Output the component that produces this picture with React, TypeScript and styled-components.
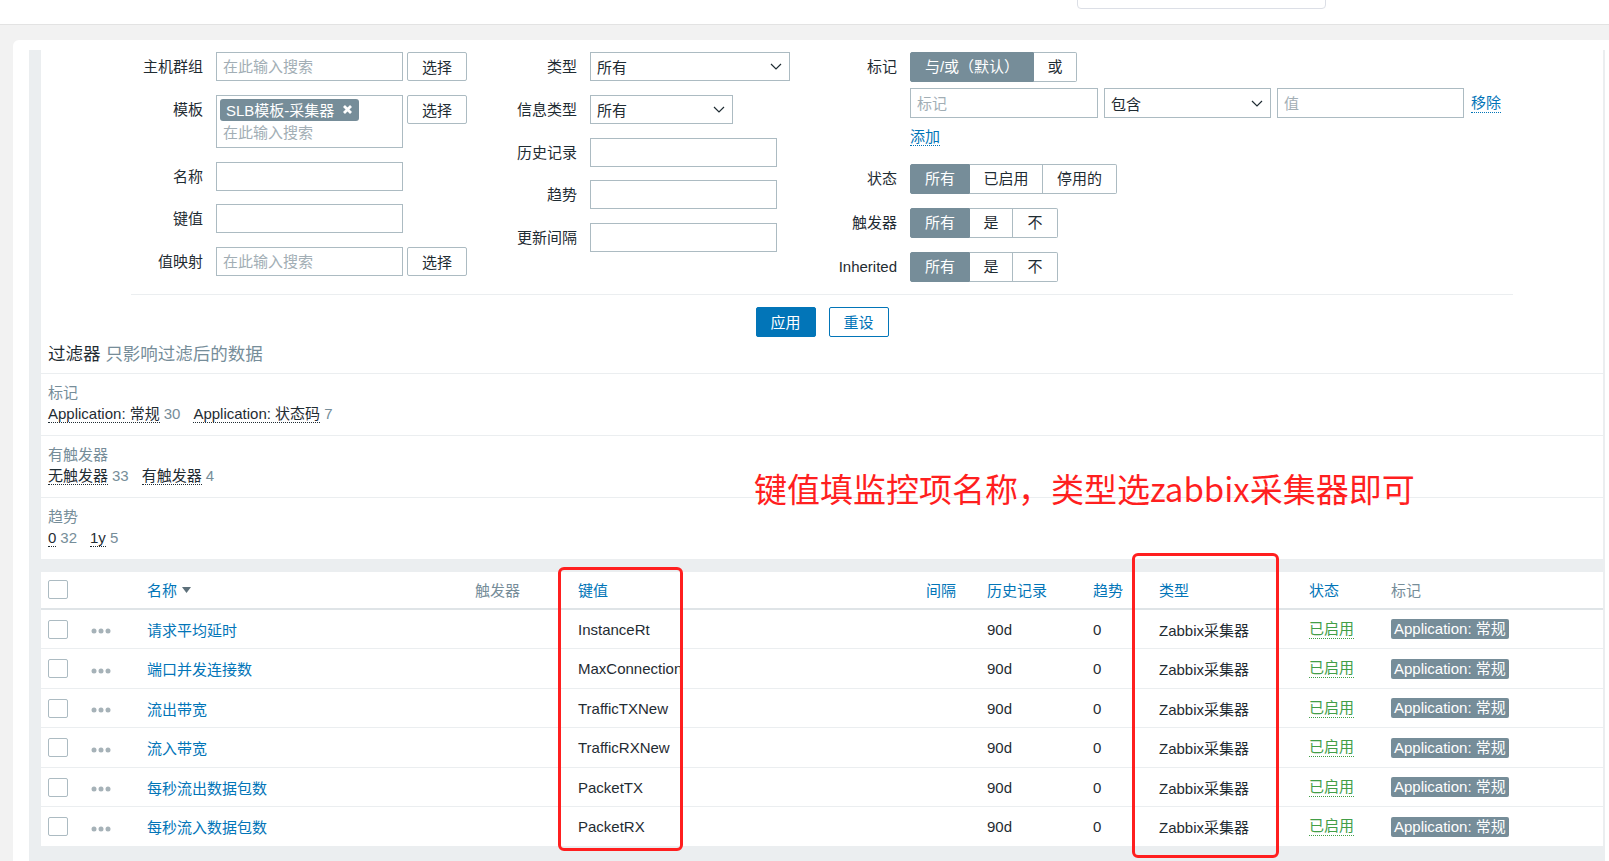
import React from 'react';
import styled, { createGlobalStyle } from 'styled-components';

const GlobalStyle = createGlobalStyle`
  html, body { margin: 0; padding: 0; background: #ffffff; overflow: hidden; }
  body {
    font-family: "Liberation Sans", Arial, "Noto Sans CJK SC", sans-serif;
    font-size: 15px;
    color: #1f2c33;
  }
  *, *::before, *::after { box-sizing: border-box; }
`;

const Page = styled.div`
  position: relative;
  width: 1609px;
  height: 861px;
  overflow: hidden;
  display: flex;
  flex-direction: column;
`;

const TopBar = styled.header`
  height: 25px;
  flex: none;
  background: #fff;
  border-bottom: 1px solid #e3e3e3;
  display: flex;
  justify-content: flex-end;
  padding-right: 283px;
`;

const TopSearch = styled.div`
  width: 249px;
  height: 30px;
  margin-top: -21px;
  border: 1px solid #dcdfe6;
  border-radius: 4px;
`;

const Main = styled.main`
  flex: 1;
  min-height: 0;
  background: #f2f2f2;
  padding: 15px 0 0 13px;
  display: flex;
`;

const Card = styled.div`
  flex: 1;
  background: #fff;
  border-radius: 6px 0 0 0;
  padding: 10px 4px 0 16px;
  display: flex;
`;

const Frame = styled.div`
  flex: 1;
  background: #ebeef0;
  padding: 0 2px 0 12px;
  display: flex;
  flex-direction: column;
`;

const FilterPanel = styled.section`
  background: #fff;
  padding-top: 2px;
`;

const FilterForm = styled.div`
  display: flex;
  padding: 0 0 12px 90px;
`;

const FormCol = styled.div<{ $labelW: number; $ml: number }>`
  display: grid;
  grid-template-columns: ${p => p.$labelW}px auto;
  column-gap: 13px;
  row-gap: 13.75px;
  margin-left: ${p => p.$ml}px;
  align-content: start;
`;

const Label = styled.div<{ $h?: number }>`
  text-align: right;
  line-height: ${p => p.$h ?? 29}px;
  white-space: nowrap;
  color: #1f2c33;
`;

const FieldGroup = styled.div`
  display: flex;
  gap: 4px;
  align-items: flex-start;
`;

const TextInput = styled.input<{ $w: number; $h?: number }>`
  width: ${p => p.$w}px;
  height: ${p => p.$h ?? 29}px;
  border: 1px solid #acbbc2;
  border-radius: 0;
  padding: 0 6px;
  margin: 0;
  font: inherit;
  color: #1f2c33;
  background: #fff;
  outline: none;
  &::placeholder { color: #a2aeb5; opacity: 1; }
`;

const SelectBox = styled.div<{ $w: number; $h?: number }>`
  width: ${p => p.$w}px;
  height: ${p => p.$h ?? 29}px;
  border: 1px solid #acbbc2;
  background: #fff;
  padding: 0 7px 0 6px;
  display: flex;
  align-items: center;
  justify-content: space-between;
  color: #1f2c33;
`;

const PickButton = styled.button`
  width: 60px;
  height: 29px;
  padding: 0;
  font: inherit;
  color: #1f2c33;
  background: #fff;
  border: 1px solid #acbbc2;
  border-radius: 2px;
`;

const MultiBox = styled.div`
  width: 187px;
  height: 53px;
  border: 1px solid #acbbc2;
  background: #fff;
  padding: 3px 0 0 3px;
  display: flex;
  flex-direction: column;
  align-items: flex-start;
`;

const Chip = styled.span`
  display: inline-flex;
  align-items: center;
  gap: 8px;
  height: 22px;
  padding: 0 6px 0 6px;
  background: #768d99;
  color: #fff;
  border-radius: 3px;
  white-space: nowrap;
`;

const MultiPlaceholder = styled.span`
  color: #a2aeb5;
  padding-left: 3px;
  margin-top: 2px;
  line-height: 20px;
`;

const Seg = styled.div`
  display: inline-flex;
`;

const SegBtn = styled.div<{ $w: number; $active?: boolean }>`
  width: ${p => p.$w}px;
  height: 30px;
  line-height: 28px;
  text-align: center;
  white-space: nowrap;
  border: 1px solid ${p => (p.$active ? '#768d99' : '#acbbc2')};
  background: ${p => (p.$active ? '#768d99' : '#fff')};
  color: ${p => (p.$active ? '#fff' : '#1f2c33')};
  & + & { border-left: none; }
  &:first-child { border-radius: 2px 0 0 2px; }
  &:last-child { border-radius: 0 2px 2px 0; }
`;

const TagBlock = styled.div`
  display: flex;
  flex-direction: column;
  align-items: flex-start;
`;

const TagRow = styled.div`
  display: flex;
  align-items: center;
  gap: 6px;
  margin-top: 6px;
`;

const AddRow = styled.div`
  margin-top: 10px;
  margin-bottom: 4.5px;
  line-height: 18px;
`;

const ActionLink = styled.span<{ $ml?: number }>`
  color: #0275b8;
  border-bottom: 1px dotted #0275b8;
  margin-left: ${p => p.$ml ?? 0}px;
  line-height: 18px;
  white-space: nowrap;
`;

const Divider = styled.div`
  height: 1px;
  background: #ebeef0;
  margin: 0 90px;
`;

const ButtonRow = styled.div`
  display: flex;
  justify-content: center;
  gap: 13px;
  margin-top: 12px;
`;

const ActionButton = styled.button<{ $primary?: boolean }>`
  width: 60px;
  height: 30px;
  padding: 0;
  font: inherit;
  border: 1px solid #0275b8;
  border-radius: 2px;
  background: ${p => (p.$primary ? '#0275b8' : '#fff')};
  color: ${p => (p.$primary ? '#fff' : '#0275b8')};
`;

const SubHeader = styled.div`
  margin-top: 7px;
  padding: 0 0 9px 7px;
  font-size: 17.5px;
  line-height: 20px;
  color: #1f2c33;
  border-bottom: 1px solid #ebeef0;
`;

const SubHint = styled.span`
  color: #768d99;
`;

const SubSection = styled.div`
  padding: 10px 7px 12px 7px;
  & + & { border-top: 1px solid #ebeef0; }
`;

const SubTitle = styled.div`
  color: #768d99;
  line-height: 18px;
`;

const SubValues = styled.div`
  display: flex;
  margin-top: 3px;
  line-height: 18px;
`;

const SubItem = styled.span`
  margin-right: 13px;
  white-space: nowrap;
`;

const SubLink = styled.span`
  color: #1f2c33;
  border-bottom: 1px dotted #1f2c33;
`;

const SubCount = styled.span`
  color: #768d99;
  margin-left: 4px;
`;

const TableBox = styled.section`
  background: #fff;
  margin-top: 13px;
`;

const columns = '43px 56px 328px 103px 348px 61px 106px 66px 150px 82px 1fr';

const TRow = styled.div<{ $head?: boolean }>`
  display: grid;
  grid-template-columns: ${columns};
  align-items: center;
  height: ${p => (p.$head ? '38px' : '39.5px')};
  border-bottom: ${p => (p.$head ? '2px solid #dfe4e7' : '1px solid #ebeef0')};
`;

const Cell = styled.div`
  padding-left: 7px;
  white-space: nowrap;
  display: flex;
  align-items: center;
`;

const DotsCell = styled(Cell)`
  padding-top: 4px;
`;

const HeadLink = styled.span`
  color: #0275b8;
`;

const HeadText = styled.span`
  color: #768d99;
`;

const RowLink = styled.span`
  color: #0275b8;
`;

const Check = styled.span`
  display: inline-block;
  width: 20px;
  height: 19px;
  border: 1px solid #acbbc2;
  border-radius: 2px;
  background: #fff;
`;

const StatusLink = styled.span`
  color: #429e47;
  border-bottom: 1px dotted #429e47;
  line-height: 18px;
`;

const TagPill = styled.span`
  display: inline-block;
  background: #768d99;
  color: #fff;
  padding: 0 3px;
  line-height: 20px;
  border-radius: 2px;
`;

const Note = styled.div`
  position: absolute;
  left: 754px;
  top: 468px;
  font-family: "Noto Sans CJK SC", sans-serif;
  font-size: 33px;
  line-height: 40px;
  color: #ff1f1f;
  white-space: nowrap;
`;

const Highlight = styled.div<{ $x: number; $y: number; $w: number; $h: number }>`
  position: absolute;
  left: ${p => p.$x}px;
  top: ${p => p.$y}px;
  width: ${p => p.$w}px;
  height: ${p => p.$h}px;
  border: 3px solid #ff1f1f;
  border-radius: 6px;
  pointer-events: none;
`;

const Chevron = () => (
  <svg width="12" height="7" viewBox="0 0 12 7">
    <polyline points="1,1 6,6 11,1" fill="none" stroke="#1f2c33" strokeWidth="1.2" />
  </svg>
);

const XIcon = () => (
  <svg width="11" height="11" viewBox="0 0 11 11">
    <path d="M2 2 L9 9 M9 2 L2 9" stroke="#fff" strokeWidth="2.8" />
  </svg>
);

const Dots = () => (
  <svg width="20" height="6" viewBox="0 0 20 6">
    <circle cx="3" cy="3" r="2.5" fill="#a6b2b8" />
    <circle cx="10" cy="3" r="2.5" fill="#a6b2b8" />
    <circle cx="17" cy="3" r="2.5" fill="#a6b2b8" />
  </svg>
);

const SortArrow = () => (
  <svg width="9" height="6" viewBox="0 0 9 6" style={{ marginLeft: 5 }}>
    <polygon points="0,0 9,0 4.5,6" fill="#5d707a" />
  </svg>
);

const items = [
  { name: '请求平均延时', key: 'InstanceRt' },
  { name: '端口并发连接数', key: 'MaxConnection' },
  { name: '流出带宽', key: 'TrafficTXNew' },
  { name: '流入带宽', key: 'TrafficRXNew' },
  { name: '每秒流出数据包数', key: 'PacketTX' },
  { name: '每秒流入数据包数', key: 'PacketRX' },
];

export default function App() {
  return (
    <Page>
      <GlobalStyle />
      <TopBar>
        <TopSearch />
      </TopBar>
      <Main>
        <Card>
          <Frame>
            <FilterPanel>
              <FilterForm>
                <FormCol $labelW={72} $ml={0}>
                  <Label>主机群组</Label>
                  <FieldGroup>
                    <TextInput $w={187} placeholder="在此输入搜索" readOnly />
                    <PickButton>选择</PickButton>
                  </FieldGroup>
                  <Label>模板</Label>
                  <FieldGroup>
                    <MultiBox>
                      <Chip>SLB模板-采集器<XIcon /></Chip>
                      <MultiPlaceholder>在此输入搜索</MultiPlaceholder>
                    </MultiBox>
                    <PickButton>选择</PickButton>
                  </FieldGroup>
                  <Label>名称</Label>
                  <TextInput $w={187} readOnly />
                  <Label>键值</Label>
                  <TextInput $w={187} readOnly />
                  <Label>值映射</Label>
                  <FieldGroup>
                    <TextInput $w={187} placeholder="在此输入搜索" readOnly />
                    <PickButton>选择</PickButton>
                  </FieldGroup>
                </FormCol>

                <FormCol $labelW={80} $ml={30}>
                  <Label>类型</Label>
                  <SelectBox $w={200}>所有<Chevron /></SelectBox>
                  <Label>信息类型</Label>
                  <SelectBox $w={143}>所有<Chevron /></SelectBox>
                  <Label>历史记录</Label>
                  <TextInput $w={187} readOnly />
                  <Label>趋势</Label>
                  <TextInput $w={187} readOnly />
                  <Label>更新间隔</Label>
                  <TextInput $w={187} readOnly />
                </FormCol>

                <FormCol $labelW={80} $ml={27}>
                  <Label $h={30}>标记</Label>
                  <TagBlock>
                    <Seg>
                      <SegBtn $w={124} $active>与/或（默认）</SegBtn>
                      <SegBtn $w={43}>或</SegBtn>
                    </Seg>
                    <TagRow>
                      <TextInput $w={188} $h={30} placeholder="标记" readOnly />
                      <SelectBox $w={167} $h={30}>包含<Chevron /></SelectBox>
                      <TextInput $w={187} $h={30} placeholder="值" readOnly />
                      <ActionLink $ml={1}>移除</ActionLink>
                    </TagRow>
                    <AddRow>
                      <ActionLink>添加</ActionLink>
                    </AddRow>
                  </TagBlock>
                  <Label $h={30}>状态</Label>
                  <Seg>
                    <SegBtn $w={60} $active>所有</SegBtn>
                    <SegBtn $w={73}>已启用</SegBtn>
                    <SegBtn $w={74}>停用的</SegBtn>
                  </Seg>
                  <Label $h={30}>触发器</Label>
                  <Seg>
                    <SegBtn $w={60} $active>所有</SegBtn>
                    <SegBtn $w={43}>是</SegBtn>
                    <SegBtn $w={45}>不</SegBtn>
                  </Seg>
                  <Label $h={30}>Inherited</Label>
                  <Seg>
                    <SegBtn $w={60} $active>所有</SegBtn>
                    <SegBtn $w={43}>是</SegBtn>
                    <SegBtn $w={45}>不</SegBtn>
                  </Seg>
                </FormCol>
              </FilterForm>
              <Divider />
              <ButtonRow>
                <ActionButton $primary>应用</ActionButton>
                <ActionButton>重设</ActionButton>
              </ButtonRow>
              <SubHeader>
                过滤器 <SubHint>只影响过滤后的数据</SubHint>
              </SubHeader>
              <SubSection>
                <SubTitle>标记</SubTitle>
                <SubValues>
                  <SubItem><SubLink>Application: 常规</SubLink><SubCount>30</SubCount></SubItem>
                  <SubItem><SubLink>Application: 状态码</SubLink><SubCount>7</SubCount></SubItem>
                </SubValues>
              </SubSection>
              <SubSection>
                <SubTitle>有触发器</SubTitle>
                <SubValues>
                  <SubItem><SubLink>无触发器</SubLink><SubCount>33</SubCount></SubItem>
                  <SubItem><SubLink>有触发器</SubLink><SubCount>4</SubCount></SubItem>
                </SubValues>
              </SubSection>
              <SubSection>
                <SubTitle>趋势</SubTitle>
                <SubValues>
                  <SubItem><SubLink>0</SubLink><SubCount>32</SubCount></SubItem>
                  <SubItem><SubLink>1y</SubLink><SubCount>5</SubCount></SubItem>
                </SubValues>
              </SubSection>
            </FilterPanel>

            <TableBox>
              <TRow $head>
                <Cell><Check /></Cell>
                <Cell />
                <Cell><HeadLink>名称</HeadLink><SortArrow /></Cell>
                <Cell><HeadText>触发器</HeadText></Cell>
                <Cell><HeadLink>键值</HeadLink></Cell>
                <Cell><HeadLink>间隔</HeadLink></Cell>
                <Cell><HeadLink>历史记录</HeadLink></Cell>
                <Cell><HeadLink>趋势</HeadLink></Cell>
                <Cell><HeadLink>类型</HeadLink></Cell>
                <Cell><HeadLink>状态</HeadLink></Cell>
                <Cell><HeadText>标记</HeadText></Cell>
              </TRow>
              {items.map(it => (
                <TRow key={it.key}>
                  <Cell><Check /></Cell>
                  <DotsCell><Dots /></DotsCell>
                  <Cell><RowLink>{it.name}</RowLink></Cell>
                  <Cell />
                  <Cell>{it.key}</Cell>
                  <Cell />
                  <Cell>90d</Cell>
                  <Cell>0</Cell>
                  <Cell>Zabbix采集器</Cell>
                  <Cell><StatusLink>已启用</StatusLink></Cell>
                  <Cell><TagPill>Application: 常规</TagPill></Cell>
                </TRow>
              ))}
            </TableBox>
          </Frame>
        </Card>
      </Main>

      <Note>键值填监控项名称，类型选zabbix采集器即可</Note>
      <Highlight $x={558} $y={567} $w={125} $h={284} />
      <Highlight $x={1132} $y={553} $w={147} $h={305} />
    </Page>
  );
}
